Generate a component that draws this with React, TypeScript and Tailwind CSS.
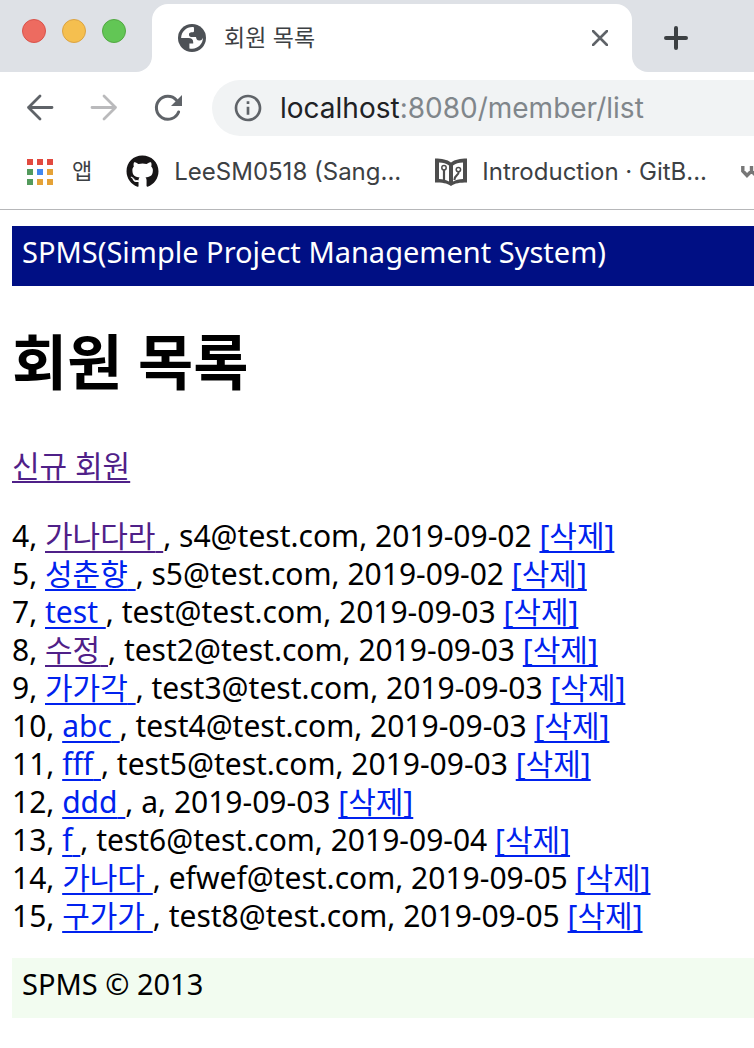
import type { ReactNode } from "react";
import { MdInfoOutline } from "react-icons/md";
import { FaGithub } from "react-icons/fa";

const members = [
  { no: 4, name: "가나다라", email: "s4@test.com", date: "2019-09-02", visited: true },
  { no: 5, name: "성춘향", email: "s5@test.com", date: "2019-09-02", visited: false },
  { no: 7, name: "test", email: "test@test.com", date: "2019-09-03", visited: false },
  { no: 8, name: "수정", email: "test2@test.com", date: "2019-09-03", visited: true },
  { no: 9, name: "가가각", email: "test3@test.com", date: "2019-09-03", visited: false },
  { no: 10, name: "abc", email: "test4@test.com", date: "2019-09-03", visited: false },
  { no: 11, name: "fff", email: "test5@test.com", date: "2019-09-03", visited: false },
  { no: 12, name: "ddd", email: "a", date: "2019-09-03", visited: false },
  { no: 13, name: "f", email: "test6@test.com", date: "2019-09-04", visited: false },
  { no: 14, name: "가나다", email: "efwef@test.com", date: "2019-09-05", visited: false },
  { no: 15, name: "구가가", email: "test8@test.com", date: "2019-09-05", visited: false },
];

function PageLink({ visited = false, children }: { visited?: boolean; children: ReactNode }) {
  return (
    <a
      href="#"
      className={`underline decoration-2 underline-offset-4 [text-decoration-skip-ink:none] ${visited ? "text-[#4f2088]" : "text-[#0022ee]"}`}
    >
      {children}
    </a>
  );
}

function GlobeIcon() {
  return (
    <svg viewBox="0 0 28 28" className="size-7">
      <circle cx="14" cy="14" r="14" fill="#4d5156" />
      <path
        fill="#fff"
        d="M15.8 3.2C9 2.4 3.4 7.4 3.1 14H10.5C13.4 14 15.2 15.6 15.2 18V19.6H11.4V24.4C18.4 26.2 25 21 25 13.6C24.4 15.8 23 16.6 21.2 16.4C19 16.2 18.2 14.8 18 12.9H13.2C11.6 12.9 11 11.8 11 10.4C11 8.6 12.2 8.2 15 8.2C15.9 8.2 16 7.6 16 6.6V4.6Z"
      />
    </svg>
  );
}

function GitBookIcon() {
  return (
    <svg viewBox="0 0 32 28" className="h-7 w-8" fill="none">
      <path fill="#4d4d4d" d="M0 .5C7 .5 12 1.5 16 4.5C20 1.5 25 .5 32 .5V24.5C25 24.5 20 25 16 28C12 25 7 24.5 0 24.5Z" />
      <path fill="#fff" d="M4 4.5C8 4.5 11.5 5.5 14 7.5V23.5C11.5 22 8 21.2 4 21ZM28 4.5C24 4.5 20.5 5.5 18 7.5V23.5C20.5 22 24 21.2 28 21Z" />
      <g stroke="#4d4d4d" strokeWidth="1.5">
        <circle cx="9" cy="9.8" r="2.2" />
        <path strokeWidth="2.2" d="M9 12V22" />
        <circle cx="23.4" cy="11.6" r="2.2" />
        <path strokeWidth="2" d="M23.6 13.8C24 17.6 19.6 16.6 19.4 22" />
      </g>
    </svg>
  );
}

export default function App() {
  return (
    <div className="min-h-screen overflow-hidden bg-white font-['Noto_Sans','Noto_Sans_CJK_KR',sans-serif] text-black">
      <header className="border-b border-[#b6b7b9] font-['Inter','Noto_Sans_CJK_KR',sans-serif] text-[#3c4043]">
        <div className="flex h-18">
          <div className="flex w-38 gap-4 rounded-br-2xl bg-[#dee1e6] pt-[19px] pl-[22px]">
            <button aria-label="Close" className="size-6 rounded-full border border-[#d9534b] bg-[#ed6b60]" />
            <button aria-label="Minimize" className="size-6 rounded-full border border-[#dba343] bg-[#f5bf4f]" />
            <button aria-label="Zoom" className="size-6 rounded-full border border-[#52a842] bg-[#62c655]" />
          </div>
          <div className="w-120 bg-[#dee1e6] pt-1">
            <div className="flex h-full items-center rounded-t-2xl bg-white pr-5 pl-[26px]">
              <GlobeIcon />
              <span className="ml-[18px] flex-1 text-[23px]">회원 목록</span>
              <button aria-label="Close tab" className="p-1">
                <svg viewBox="0 0 16 16" className="size-4 stroke-[#5f6368]" strokeWidth="2.6" strokeLinecap="round">
                  <path d="M1 1 15 15M15 1 1 15" />
                </svg>
              </button>
            </div>
          </div>
          <div className="flex-1 rounded-bl-2xl bg-[#dee1e6] pt-[26px] pl-8">
            <button aria-label="New tab" className="block">
              <svg viewBox="0 0 24 24" className="size-6 stroke-[#3c4043]" strokeWidth="4" strokeLinecap="round">
                <path d="M12 2V22M2 12H22" />
              </svg>
            </button>
          </div>
        </div>
        <div className="flex h-18 items-center pl-5">
          <button aria-label="Back">
            <svg viewBox="0 0 40 40" className="size-10 stroke-[#5f6368]" fill="none" strokeWidth="2.8" strokeLinecap="round" strokeLinejoin="round">
              <path d="M32 19.5H8.5M20 8 8.5 19.5 20 31" />
            </svg>
          </button>
          <button aria-label="Forward" className="ml-6">
            <svg viewBox="0 0 40 40" className="size-10 stroke-[#bababc]" fill="none" strokeWidth="2.8" strokeLinecap="round" strokeLinejoin="round">
              <path d="M8 19.5H31.5M20 8 31.5 19.5 20 31" />
            </svg>
          </button>
          <button aria-label="Reload" className="ml-6">
            <svg viewBox="0 0 40 40" className="size-10" fill="none">
              <path stroke="#5f6368" strokeWidth="3" strokeLinecap="round" d="M30.6 24A11.5 11.5 0 1 1 28.5 12.2" />
              <path fill="#5f6368" d="M34 7V18H23Z" />
            </svg>
          </button>
          <div className="ml-6 flex h-14 flex-1 items-center rounded-l-full bg-[#f1f3f4] pl-5">
            <MdInfoOutline className="size-8 text-[#5f6368]" />
            <div className="ml-4 text-[28px] text-[#80868b]">
              <span className="text-[#202124]">localhost</span>:8080/member/list
            </div>
          </div>
        </div>
        <nav className="flex h-[65px] items-center gap-[34px] overflow-hidden pb-[10px] pl-[27px] text-[24px] whitespace-nowrap">
          <a href="#" className="flex items-center gap-[19px] text-[22px]">
            <svg viewBox="0 0 26 26" className="size-[26px]">
              <path fill="#e24a3f" d="M0 0h6v6H0zM10 0h6v6h-6zM20 0h6v6h-6z" />
              <path fill="#539a5c" d="M0 10h6v6H0zM0 20h6v6H0z" />
              <path fill="#4288f0" d="M10 10h6v6h-6z" />
              <path fill="#e5a237" d="M20 10h6v6h-6zM10 20h6v6h-6zM20 20h6v6h-6z" />
            </svg>
            앱
          </a>
          <a href="#" className="flex items-center gap-[15px]">
            <FaGithub className="size-[33px] text-[#171516]" />
            LeeSM0518 (Sang...
          </a>
          <a href="#" className="flex items-center gap-[15px]">
            <GitBookIcon />
            Introduction · GitB...
          </a>
          <a href="#" aria-label="Bookmark" className="shrink-0">
            <svg viewBox="0 0 24 12" className="h-3 w-6" fill="none" stroke="#777" strokeWidth="3.4">
              <path d="M1.8 0V5L6 9.5 10.5 5V0M10.5 5 15 9.5 19.5 5V0" />
            </svg>
          </a>
        </nav>
      </header>
      <main className="pt-4 pl-3 text-[30px] leading-[38px]">
        <div className="h-15 bg-[#000f84] px-[10px] pt-[7px] text-[29px] text-white">SPMS(Simple Project Management System)</div>
        <h1 className="mt-[38px] text-[60px] leading-[76px] font-bold">회원 목록</h1>
        <p className="mt-[47px]"><PageLink visited>신규 회원</PageLink></p>
        <ul className="mt-8">
          {members.map((m) => (
            <li key={m.no}>
              {m.no}, <PageLink visited={m.visited}>{m.name}{" "}</PageLink>, {m.email}, {m.date} <PageLink>[삭제]</PageLink>
            </li>
          ))}
        </ul>
        <footer className="mt-[23px] h-15 bg-[#f2fcf0] px-[10px] pt-[7px] text-[29px]">SPMS © 2013</footer>
      </main>
    </div>
  );
}
